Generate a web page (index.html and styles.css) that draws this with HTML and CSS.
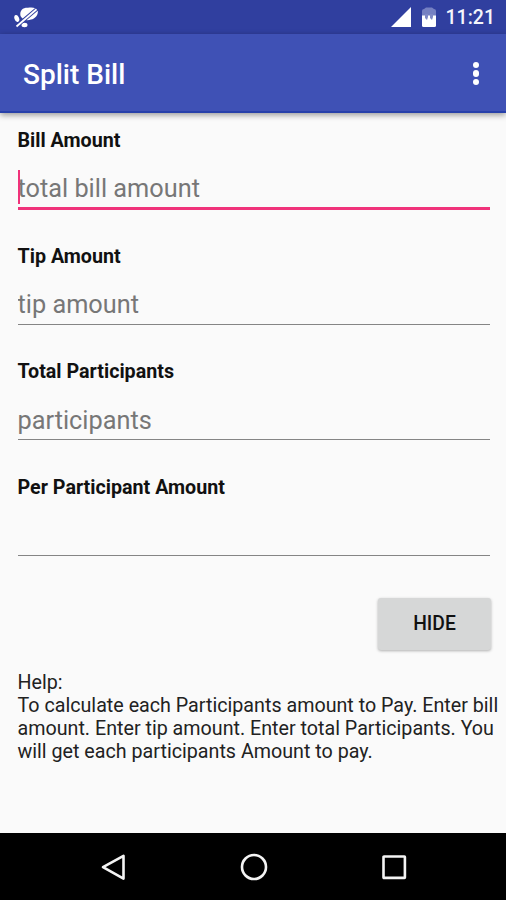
FILE: index.html
```
<!DOCTYPE html>
<html lang="en">
  <head>
    <meta charset="UTF-8" />
    <meta name="viewport" content="width=device-width, initial-scale=1.0" />
    <title>Split Bill</title>
    <link rel="stylesheet" href="styles.css">
  </head>
  <body>
    <div class="status-bar">
      <svg class="icon-debug" width="26" height="22" viewBox="0 0 26 22">
        <path d="M6.500 9C5.500 3 9 0.500 14 0.700C18 0 23 0.500 23.800 3.500C24.500 8 21 12 17 12.500C13 14 8.500 13 6.500 9Z" fill="#fff" />
        <ellipse cx="2.800" cy="11.500" rx="2.300" ry="3.600" transform="rotate(-20 2.800 11.500)" fill="#fff" />
        <ellipse cx="10.500" cy="18" rx="3" ry="2.200" fill="#fff" />
        <path d="M1.500 20L23.500 1.500" stroke="#303f9f" stroke-width="3.600" />
        <path d="M2.500 19.500L22.500 2.200" stroke="#fff" stroke-width="1.800" />
      </svg>
      <div class="status-right">
        <svg class="icon-signal" width="20" height="20" viewBox="0 0 20 20">
          <path d="M0 20L20 0V20Z" fill="#fff" />
        </svg>
        <svg class="icon-battery" width="14" height="20" viewBox="0 0 14 20">
          <path d="M0 9V4Q0 2 2 2L4 0.500H10L12 2Q14 2 14 4V9Z" fill="#7580c2" />
          <path d="M0 8.500H14V18.500Q14 20 12.500 20H1.500Q0 20 0 18.500Z" fill="#fff" />
          <path d="M3 7H6V10L5 13L3 11ZM8 7H11V10L10 13L8 11Z" fill="#7f89c6" />
        </svg>
        <span class="clock">11:21</span>
      </div>
    </div>

    <header class="toolbar">
      <h1>Split Bill</h1>
      <div class="overflow"><i></i><i></i><i></i></div>
    </header>

    <main>
      <div class="field active">
        <label for="bill">Bill Amount</label>
        <div class="input-row">
          <input type="text" id="bill" placeholder="total bill amount" />
          <span class="cursor"></span>
        </div>
      </div>
      <div class="field">
        <label for="tip">Tip Amount</label>
        <div class="input-row">
          <input type="text" id="tip" placeholder="tip amount" />
        </div>
      </div>
      <div class="field">
        <label for="participants">Total Participants</label>
        <div class="input-row">
          <input type="text" id="participants" placeholder="participants" />
        </div>
      </div>
      <div class="field">
        <label for="each">Per Participant Amount</label>
        <div class="input-row">
          <input type="text" id="each" />
        </div>
      </div>
      <button type="button" class="btn-hide">HIDE</button>
      <p class="help">Help:<br>To calculate each Participants amount to Pay. Enter bill<br>amount. Enter tip amount. Enter total Participants. You<br>will get each participants Amount to pay.</p>
    </main>

    <nav class="nav-bar">
      <svg width="28" height="28" viewBox="0 0 28 28">
        <path d="M3 14.200L23.500 2.800V25.600Z" fill="none" stroke="#f4f4f4" stroke-width="2.600" stroke-linejoin="round" />
      </svg>
      <svg width="28" height="28" viewBox="0 0 28 28">
        <circle cx="14" cy="14" r="12" fill="none" stroke="#f4f4f4" stroke-width="2.600" />
      </svg>
      <svg width="28" height="28" viewBox="0 0 28 28">
        <rect x="3.500" y="3.500" width="21.400" height="21.400" rx="0.500" fill="none" stroke="#f4f4f4" stroke-width="2.600" />
      </svg>
    </nav>
  </body>
</html>
```
FILE: styles.css
```
* {
  box-sizing: border-box;
}
body {
  margin: 0;
  height: 900px;
  display: flex;
  flex-direction: column;
  overflow: hidden;
  background-color: #fafafa;
  color: #111;
  font-family: Roboto, "Liberation Sans", sans-serif;
}
.status-bar {
  display: flex;
  justify-content: space-between;
  height: 34px;
  padding: 7px 11px 0 14px;
  background-color: #303f9f;
}
.status-right {
  display: flex;
}
.icon-battery {
  margin-left: 11px;
}
.clock {
  margin-left: 10px;
  line-height: 22px;
  font-size: 19.500px;
  font-weight: 500;
  color: #f4f5fb;
}
.toolbar {
  display: flex;
  justify-content: space-between;
  align-items: center;
  height: 79px;
  padding: 0 27px 0 23px;
  background-color: #3f51b5;
  border-bottom: 2px solid #2740aa;
  box-shadow: 0 2px 6px rgba(0, 0, 0, 0.4);
}
h1 {
  margin: 5px 0 0;
  font-size: 28px;
  line-height: 32px;
  font-weight: 500;
  color: #fff;
}
.overflow {
  display: flex;
  flex-direction: column;
  gap: 2px;
  margin-top: 2px;
}
.overflow i {
  width: 6.500px;
  height: 6.500px;
  border-radius: 50%;
  background-color: #fff;
}
main {
  flex: 1;
  display: flex;
  flex-direction: column;
  padding: 14px 0 0 17.500px;
}
.field {
  height: 115.700px;
  margin-right: 16px;
}
label {
  display: block;
  height: 27px;
  line-height: 28px;
  font-size: 19.700px;
  font-weight: 700;
}
.input-row {
  position: relative;
  height: 55px;
}
input {
  display: block;
  width: 100%;
  height: 55px;
  padding: 16px 0 0;
  border: none;
  border-bottom: 1.500px solid #858585;
  outline: none;
  background: none;
  font-family: inherit;
  font-size: 25.300px;
}
input::placeholder {
  color: #777;
  opacity: 1;
}
.active input {
  height: 56px;
  border-bottom: 3px solid #f0327a;
}
.cursor {
  position: absolute;
  left: 0;
  top: 16px;
  width: 2px;
  height: 34px;
  background-color: #f0327a;
}
.btn-hide {
  align-self: flex-end;
  width: 113px;
  height: 52px;
  margin: 8px 15px 0 0;
  border: none;
  border-radius: 3px;
  background-color: #d6d7d7;
  box-shadow: 0 1px 3px rgba(0, 0, 0, 0.3);
  font-family: inherit;
  font-size: 19.300px;
  font-weight: 500;
  color: #111;
}
.help {
  margin: 21px 0 0;
  font-size: 19.700px;
  line-height: 23px;
  white-space: nowrap;
  color: #222;
}
.nav-bar {
  display: flex;
  justify-content: center;
  align-items: center;
  gap: 112px;
  height: 67px;
  padding-left: 1px;
  background-color: #000;
}
```
